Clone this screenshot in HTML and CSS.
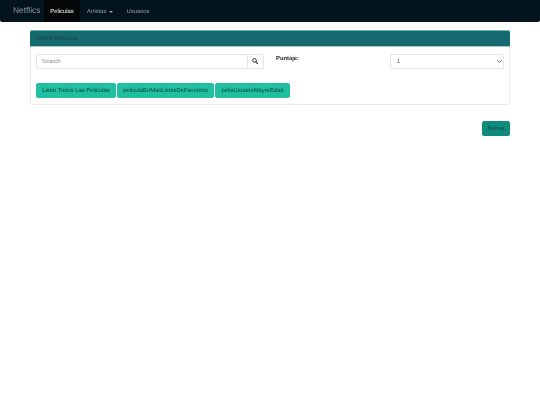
FILE: index.html
```html
<!DOCTYPE html>
<html lang="es">
<head>
<meta charset="utf-8">
<title>Netflics</title>
<link rel="stylesheet" href="styles.css">
</head>
<body>
<nav class="navbar">
  <a class="brand">Netflics</a>
  <a class="nav-link active">Peliculas</a>
  <a class="nav-link">Artistas<span class="caret"></span></a>
  <a class="nav-link">Usuarios</a>
</nav>
<main class="container">
  <section class="card">
    <header class="card-header">Filtros Peliculas</header>
    <div class="card-body">
      <div class="filters">
        <div class="search">
          <input class="search-input" type="text" placeholder="Search">
          <button class="search-btn" type="button" aria-label="Buscar">
            <svg class="search-icon" viewBox="0 0 16 16" width="6" height="6"><circle cx="6.5" cy="6.5" r="5" fill="none" stroke="#212529" stroke-width="2.4"/><path d="M10.5 10.5 15 15" stroke="#212529" stroke-width="2.8" stroke-linecap="round"/></svg>
          </button>
        </div>
        <label class="score-label">Puntaje:</label>
        <div class="select-box">
          <span>1</span>
          <svg viewBox="0 0 16 16" width="5" height="5"><path d="M2 5l6 6 6-6" fill="none" stroke="#343a40" stroke-width="2.4" stroke-linecap="round" stroke-linejoin="round"/></svg>
        </div>
      </div>
      <div class="actions">
        <button class="btn btn-teal" type="button">Listar Todos Las Peliculas</button>
        <button class="btn btn-teal" type="button">peliculaEnMasListasDeFavoritos</button>
        <button class="btn btn-teal" type="button">pelisUsuarioMayorEdad</button>
      </div>
    </div>
  </section>
  <div class="footer-actions">
    <button class="btn btn-dark-teal" type="button">Nueva</button>
  </div>
</main>
</body>
</html>
```
FILE: styles.css
```css
* { box-sizing: border-box; }
html, body { margin: 0; padding: 0; background: #fff; }
body {
  font-family: "Liberation Sans", Arial, sans-serif;
  font-size: 5.85px;
  color: #212529;
  width: 540px;
  height: 405px;
  overflow: hidden;
  text-rendering: geometricPrecision;
}
.navbar, .container { filter: blur(0.3px); }
.navbar {
  height: 22px;
  background: #03141f;
  border-radius: 0 0 2px 2px;
  display: flex;
  align-items: stretch;
  padding-left: 13px;
}
.brand {
  color: #8d99a3;
  font-size: 8.4px;
  line-height: 20px;
  width: 31px;
}
.nav-link {
  color: #96a2ab;
  line-height: 22px;
  padding: 1px 6px 0 7px;
  display: flex;
  align-items: center;
}
.nav-link.active {
  background: #040707;
  color: #fff;
  padding: 1px 0 0;
  width: 36px;
  justify-content: center;
}
.caret {
  width: 0;
  height: 0;
  border-left: 2px solid transparent;
  border-right: 2px solid transparent;
  border-top: 2px solid #96a2ab;
  margin-left: 3px;
}
.container {
  padding: 8px 30px 0;
}
.card {
  border: 1px solid #e9ecef;
  border-top: 0;
  border-radius: 2px;
  height: 75px;
}
.card-header {
  height: 17px;
  margin: 0 -1px;
  background: #156a70;
  border-top: 1px solid #6fb3b3;
  border-bottom: 1px solid #a5c9c9;
  border-radius: 2px 2px 0 0;
  color: #233b40;
  line-height: 16px;
  padding-left: 7px;
}
.card-body {
  padding: 7px 5px 0;
}
.filters {
  display: flex;
  align-items: flex-start;
}
.search {
  width: 228px;
  height: 15px;
  display: flex;
  border: 1px solid #e3e6e9;
  border-radius: 2px;
}
.search-input {
  flex: 1;
  min-width: 0;
  border: 0;
  outline: 0;
  padding: 0 5px;
  background: #fff;
  font: 5.85px "Liberation Sans", Arial, sans-serif;
  text-rendering: geometricPrecision;
}
.search-input::placeholder { color: #80888f; opacity: 1; }
.search-btn {
  width: 16px;
  padding: 0;
  border: 0;
  border-left: 1px solid #e3e6e9;
  background: #fff;
  display: flex;
  align-items: center;
  justify-content: center;
}
.search-icon { margin: -1px 1px 0 0; }
.score-label {
  margin-left: 12px;
  width: 114px;
  font-weight: 700;
  line-height: 10px;
  color: #212529;
}
.select-box {
  width: 114px;
  height: 15px;
  border: 1px solid #e3e6e9;
  border-radius: 2px;
  display: flex;
  align-items: center;
  justify-content: space-between;
  padding: 0 1.5px 0 6px;
  color: #55606a;
}
.actions {
  display: flex;
  gap: 1px;
  margin-top: 14px;
}
.btn {
  height: 15px;
  padding: 0 5.25px;
  border: 1px solid transparent;
  border-radius: 2px;
  font: 5.85px "Liberation Sans", Arial, sans-serif;
  text-rendering: geometricPrecision;
  color: #0f4238;
  white-space: nowrap;
}
.btn-teal { background: #1fbf9f; border-color: #1fbf9f; }
.btn-dark-teal {
  background: #0f8a7e;
  border-color: #0f8a7e;
  color: #0e4a44;
  padding: 0;
  width: 28px;
}
.footer-actions {
  display: flex;
  justify-content: flex-end;
  margin-top: 16px;
}
```
